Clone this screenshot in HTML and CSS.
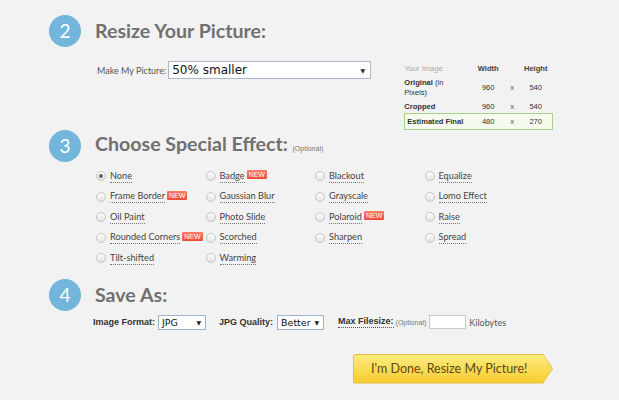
FILE: index.html
```html
<!DOCTYPE html>
<html>
<head>
<meta charset="utf-8">
<link rel="stylesheet" href="styles.css">
</head>
<body>
<div class="wrap">
  <div class="step-head">
    <div class="num">2</div>
    <h2 class="title">Resize Your Picture:</h2>
  </div>
  <div class="resize-body">
    <div class="pick">
      <span class="pick-label">Make My Picture:</span>
      <div class="fake-select big"><span>50% smaller</span><span class="arrow">&#9660;</span></div>
    </div>
    <div class="dims">
      <div class="drow dhead"><span class="c-label">Your Image</span><span class="c-w">Width</span><span class="c-x"></span><span class="c-h">Height</span></div>
      <div class="drow dorig"><span class="c-label"><b>Original</b> (in<br>Pixels)</span><span class="c-w">960</span><span class="c-x">x</span><span class="c-h">540</span></div>
      <div class="drow dcrop"><span class="c-label"><b>Cropped</b></span><span class="c-w">960</span><span class="c-x">x</span><span class="c-h">540</span></div>
      <div class="drow dfinal"><span class="c-label"><b>Estimated Final</b></span><span class="c-w">480</span><span class="c-x">x</span><span class="c-h">270</span></div>
    </div>
  </div>

  <div class="step-head">
    <div class="num">3</div>
    <h2 class="title">Choose Special Effect: <span class="opt">(Optional)</span></h2>
  </div>
  <div class="effects">
    <div class="fx"><span class="radio on"></span><span class="fx-label">None</span></div>
    <div class="fx"><span class="radio"></span><span class="fx-label">Badge</span><span class="new">NEW</span></div>
    <div class="fx"><span class="radio"></span><span class="fx-label">Blackout</span></div>
    <div class="fx"><span class="radio"></span><span class="fx-label">Equalize</span></div>
    <div class="fx"><span class="radio"></span><span class="fx-label">Frame Border</span><span class="new">NEW</span></div>
    <div class="fx"><span class="radio"></span><span class="fx-label">Gaussian Blur</span></div>
    <div class="fx"><span class="radio"></span><span class="fx-label">Grayscale</span></div>
    <div class="fx"><span class="radio"></span><span class="fx-label">Lomo Effect</span></div>
    <div class="fx"><span class="radio"></span><span class="fx-label">Oil Paint</span></div>
    <div class="fx"><span class="radio"></span><span class="fx-label">Photo Slide</span></div>
    <div class="fx"><span class="radio"></span><span class="fx-label">Polaroid</span><span class="new">NEW</span></div>
    <div class="fx"><span class="radio"></span><span class="fx-label">Raise</span></div>
    <div class="fx"><span class="radio"></span><span class="fx-label">Rounded Corners</span><span class="new">NEW</span></div>
    <div class="fx"><span class="radio"></span><span class="fx-label">Scorched</span></div>
    <div class="fx"><span class="radio"></span><span class="fx-label">Sharpen</span></div>
    <div class="fx"><span class="radio"></span><span class="fx-label">Spread</span></div>
    <div class="fx"><span class="radio"></span><span class="fx-label">Tilt-shifted</span></div>
    <div class="fx"><span class="radio"></span><span class="fx-label">Warming</span></div>
  </div>

  <div class="step-head save-head">
    <div class="num">4</div>
    <h2 class="title">Save As:</h2>
  </div>
  <div class="save-row">
    <span class="flabel">Image Format:</span>
    <div class="fake-select small fmt"><span>JPG</span><span class="arrow">&#9660;</span></div>
    <span class="flabel q">JPG Quality:</span>
    <div class="fake-select small qual"><span>Better</span><span class="arrow">&#9660;</span></div>
    <span class="flabel dotted">Max Filesize:</span>
    <span class="sopt">(Optional)</span>
    <span class="kb-input"></span>
    <span class="kb">Kilobytes</span>
  </div>
  <div class="btn-row">
    <div class="done-btn"><div class="done-inner">I'm Done, Resize My Picture!</div></div>
  </div>
</div>
</body>
</html>
```
FILE: styles.css
```css
html, body {
  margin: 0;
  padding: 0;
  background: #f2f2f2;
  font-family: Lato, "Open Sans", sans-serif;
}
.wrap {
  padding: 15px 0 0 49px;
}
.step-head {
  display: flex;
  align-items: center;
  height: 32px;
}
.num {
  width: 32px;
  height: 32px;
  border-radius: 50%;
  background: #72b6dc;
  color: #fff;
  font-family: Lato, sans-serif;
  font-size: 19px;
  line-height: 32px;
  text-align: center;
  flex: none;
}
.title {
  margin: 0 0 0 14px;
  font-family: Lato, sans-serif;
  font-weight: 700;
  font-size: 19.6px;
  color: #707070;
  line-height: 24px;
  white-space: nowrap;
}
.opt {
  font-family: "Liberation Sans", Arial, sans-serif;
  font-weight: 400;
  font-size: 7px;
  color: #777;
}
.resize-body {
  display: flex;
  align-items: flex-start;
  margin-top: 14px;
  padding-left: 48px;
  height: 69px;
}
.pick {
  display: flex;
  align-items: center;
  height: 18px;
}
.pick-label {
  font-size: 9px;
  color: #555;
  margin-right: 2px;
  white-space: nowrap;
}
.fake-select {
  display: flex;
  align-items: center;
  justify-content: space-between;
  background: #fff;
  border: 1px solid #a9b7c9;
  box-sizing: border-box;
  font-family: "DejaVu Sans", Verdana, sans-serif;
  color: #111;
}
.fake-select.big {
  width: 203px;
  height: 18px;
  font-size: 12px;
  padding: 0 5px 0 3px;
}
.arrow {
  font-size: 6px;
  color: #222;
}
.dims {
  margin-left: 33px;
  width: 149px;
  font-family: "Liberation Sans", Arial, sans-serif;
  font-size: 7.6px;
  color: #333;
}
.drow {
  display: grid;
  grid-template-columns: 66px 36px 12px 35px;
  align-items: center;
  box-sizing: border-box;
}
.c-w, .c-x, .c-h { text-align: center; }
.c-x { color: #555; }
.dhead { height: 15px; }
.dhead .c-label { color: #aaa; }
.dhead .c-w, .dhead .c-h { font-weight: 700; color: #444; }
.dorig { height: 24px; line-height: 10.5px; }
.dcrop { height: 13px; }
.dfinal {
  height: 17px;
  border: 1px solid #a6d286;
  background: #f5fbee;
  padding-left: 2px;
  grid-template-columns: 63px 36px 12px 35px;
}
.effects {
  display: grid;
  grid-template-columns: repeat(4, 109.5px);
  grid-auto-rows: 20.5px;
  margin-top: 4px;
  padding-left: 47px;
}
.fx {
  display: flex;
  align-items: center;
  white-space: nowrap;
}
.radio {
  width: 10px;
  height: 10px;
  box-sizing: border-box;
  border-radius: 50%;
  border: 1px solid #c6c6c6;
  background: linear-gradient(#fdfdfd, #e4e4e4);
  margin-right: 4px;
  flex: none;
  display: flex;
  align-items: center;
  justify-content: center;
}
.radio.on::after {
  content: "";
  width: 4px;
  height: 4px;
  border-radius: 50%;
  background: #666;
}
.fx-label {
  font-size: 9.2px;
  color: #444;
  line-height: 12px;
  border-bottom: 1px dotted #777;
}
.new {
  align-self: flex-start;
  margin-top: 4px;
  margin-left: 2px;
  height: 9px;
  line-height: 9px;
  padding: 0 2px;
  border-radius: 1px;
  background: linear-gradient(#f97e68, #ee4a38);
  color: #fff;
  font-family: "Liberation Sans", Arial, sans-serif;
  font-size: 7px;
}
.save-head {
  margin-top: 10px;
}
.save-row {
  display: flex;
  align-items: center;
  height: 15px;
  margin-top: 4px;
  padding-left: 44px;
  white-space: nowrap;
}
.flabel {
  font-family: "Liberation Sans", Arial, sans-serif;
  font-weight: 700;
  font-size: 9px;
  color: #333;
}
.flabel.q { margin-left: 13px; }
.flabel.dotted {
  margin-left: 14px;
  border-bottom: 1px dotted #555;
  line-height: 11px;
}
.fake-select.small {
  height: 15px;
  font-size: 9.5px;
  padding: 0 4px 0 3px;
  border-color: #9fb4cc;
}
.fmt { width: 48px; margin-left: 3px; }
.qual { width: 47px; margin-left: 4px; }
.sopt {
  font-family: "Liberation Sans", Arial, sans-serif;
  font-size: 7px;
  color: #777;
  margin-left: 2px;
}
.kb-input {
  width: 37px;
  height: 14px;
  box-sizing: border-box;
  border: 1px solid #c9c9c9;
  background: #fff;
  margin-left: 3px;
}
.kb {
  font-size: 9px;
  color: #555;
  margin-left: 3px;
}
.btn-row {
  display: flex;
  padding-left: 304px;
  margin-top: 24px;
}
.done-btn {
  width: 200px;
  height: 30px;
  background: #e5c03c;
  clip-path: polygon(0 0, 190px 0, 200px 50%, 190px 100%, 0 100%);
  border-radius: 3px 0 0 3px;
  padding: 1px;
  box-sizing: border-box;
}
.done-inner {
  height: 100%;
  background: linear-gradient(#fdec7e, #f6cc2e);
  clip-path: polygon(0 0, 189px 0, 198px 50%, 189px 100%, 0 100%);
  border-radius: 2px 0 0 2px;
  font-size: 12.5px;
  color: #5b4a16;
  line-height: 28px;
  padding-left: 17px;
  white-space: nowrap;
}
```
